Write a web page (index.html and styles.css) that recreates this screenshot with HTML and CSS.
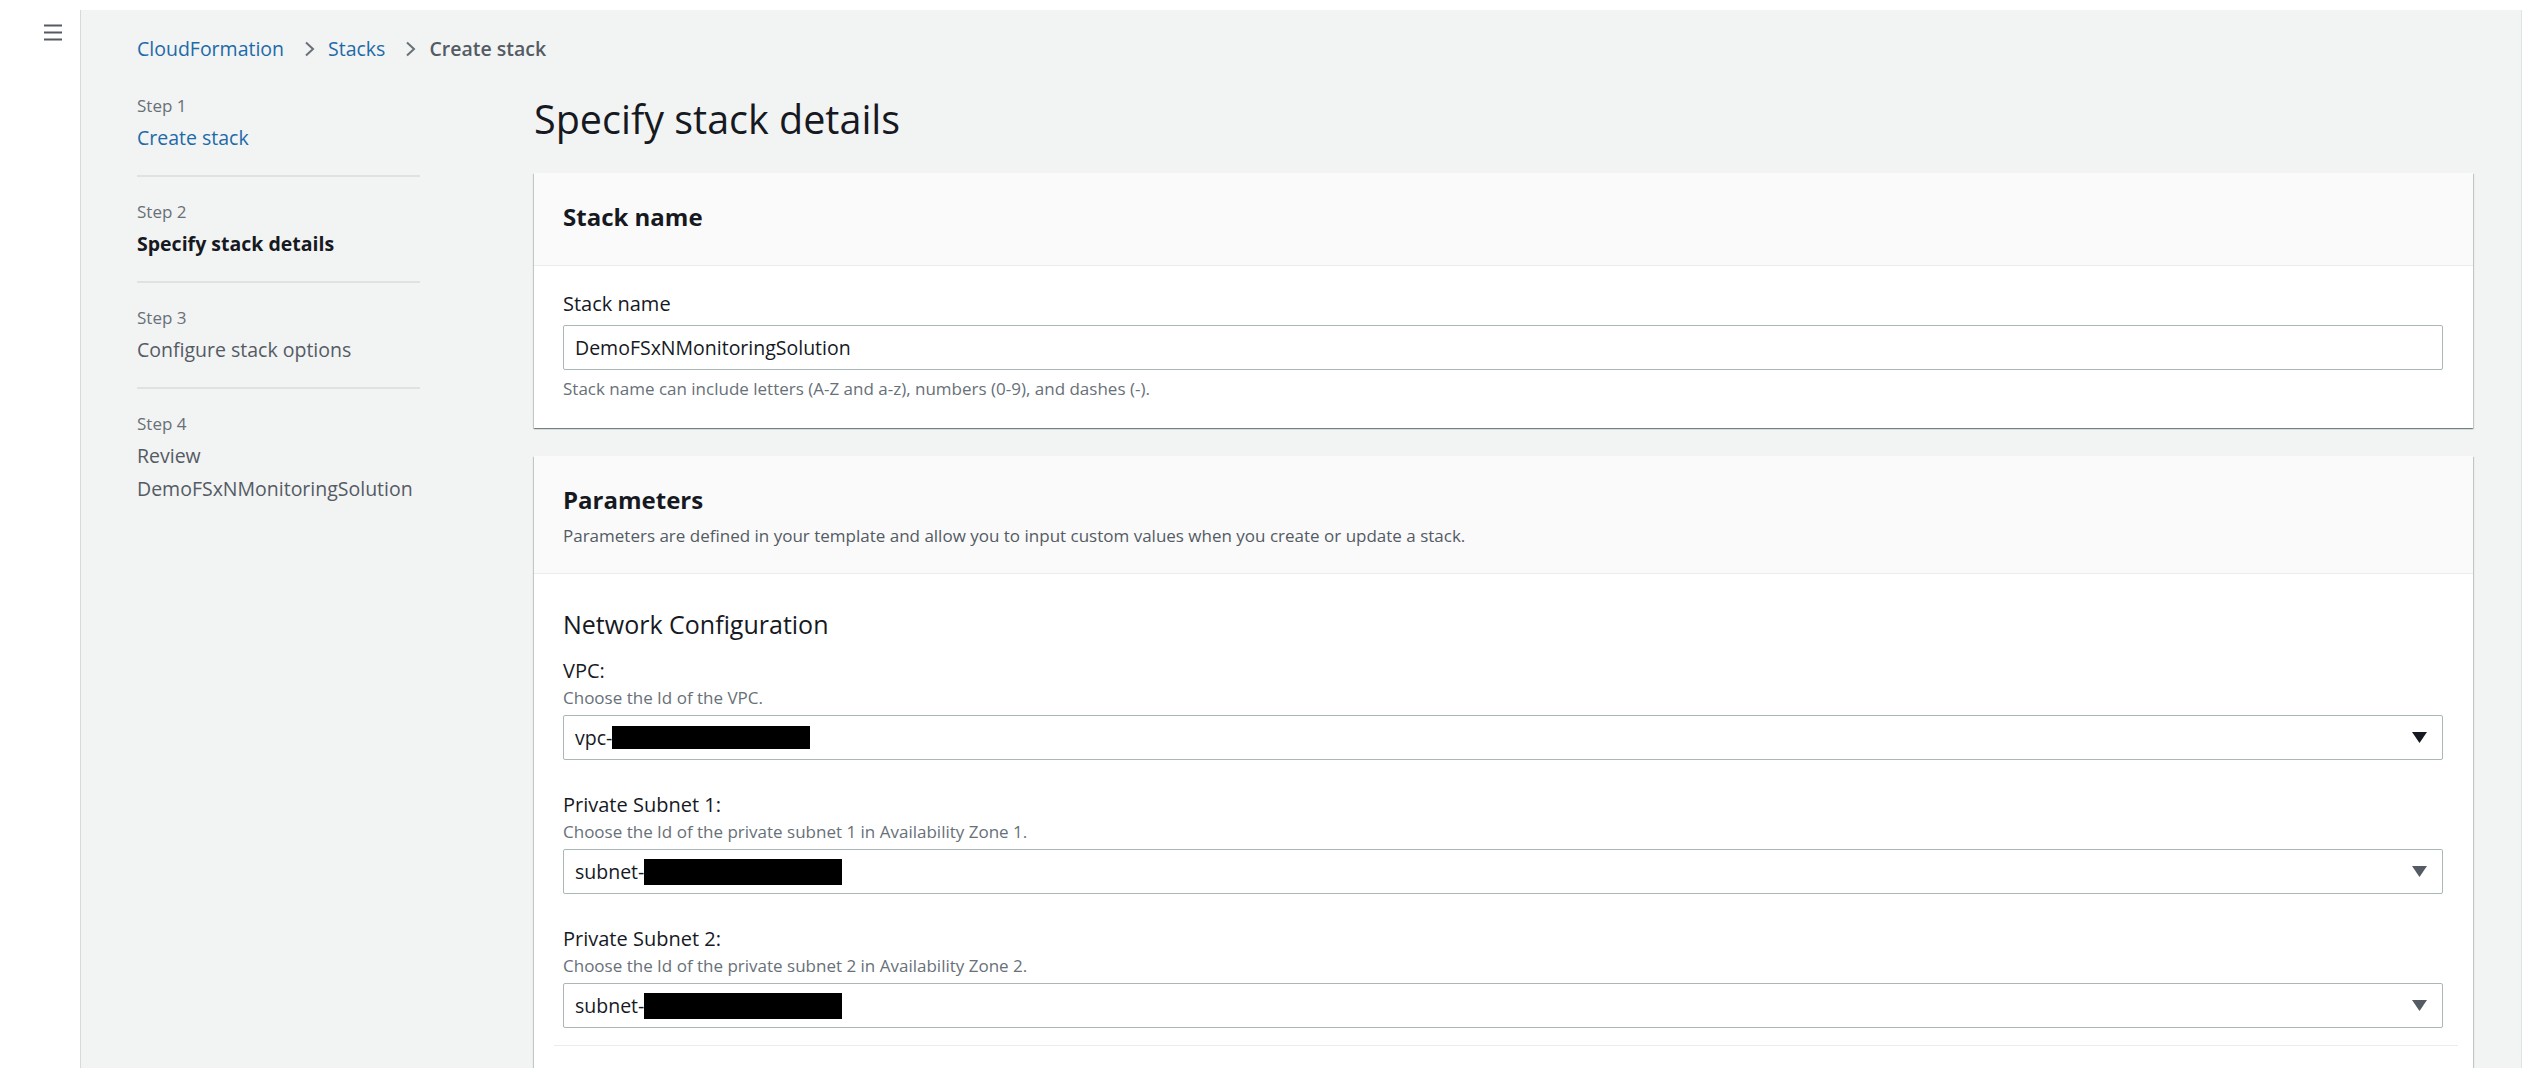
FILE: index.html
```html
<!DOCTYPE html>
<html lang="en">
<head>
<meta charset="utf-8">
<title>Create stack - CloudFormation</title>
<link rel="stylesheet" href="styles.css">
</head>
<body>
<div class="app">
  <aside class="rail">
    <button class="menu" aria-label="Open navigation">
      <svg width="18" height="18" viewBox="0 0 18 18"><path d="M0 2.5h18M0 9.5h18M0 16.5h18" stroke="#545b64" stroke-width="2" fill="none"/></svg>
    </button>
  </aside>
  <div class="content">
    <nav class="crumbs">
      <a class="crumb-link" href="#">CloudFormation</a>
      <svg class="chev" width="11" height="16" viewBox="0 0 11 16"><path d="M2 1.5l7 6.5-7 6.5" stroke="#687078" stroke-width="2" fill="none"/></svg>
      <a class="crumb-link" href="#">Stacks</a>
      <svg class="chev" width="11" height="16" viewBox="0 0 11 16"><path d="M2 1.5l7 6.5-7 6.5" stroke="#687078" stroke-width="2" fill="none"/></svg>
      <span class="crumb-current">Create stack</span>
    </nav>
    <div class="layout">
      <ol class="steps">
        <li class="step">
          <div class="step-num">Step 1</div>
          <a class="step-name step-link" href="#">Create stack</a>
        </li>
        <li class="step">
          <div class="step-num">Step 2</div>
          <div class="step-name step-active">Specify stack details</div>
        </li>
        <li class="step">
          <div class="step-num">Step 3</div>
          <div class="step-name">Configure stack options</div>
        </li>
        <li class="step step-last">
          <div class="step-num">Step 4</div>
          <div class="step-name">Review</div>
          <div class="step-name">DemoFSxNMonitoringSolution</div>
        </li>
      </ol>
      <main class="main">
        <h1 class="title">Specify stack details</h1>
        <section class="card">
          <header class="card-head">
            <h2 class="card-title">Stack name</h2>
          </header>
          <div class="card-body card-body-name">
            <label class="field-label">Stack name</label>
            <div class="input">DemoFSxNMonitoringSolution</div>
            <div class="hint hint-after">Stack name can include letters (A-Z and a-z), numbers (0-9), and dashes (-).</div>
          </div>
        </section>
        <section class="card card-params">
          <header class="card-head card-head-params">
            <h2 class="card-title">Parameters</h2>
            <p class="card-desc">Parameters are defined in your template and allow you to input custom values when you create or update a stack.</p>
          </header>
          <div class="card-body card-body-params">
            <h3 class="group-title">Network Configuration</h3>
            <div class="field field-first">
              <div class="field-label">VPC:</div>
              <div class="hint">Choose the Id of the VPC.</div>
              <div class="input select">
                <span class="value">vpc-<span class="redact redact-vpc"></span></span>
                <svg class="caret" width="15" height="11" viewBox="0 0 15 11"><path d="M0 0h15L7.5 11z" fill="#16191f"/></svg>
              </div>
            </div>
            <div class="field">
              <div class="field-label">Private Subnet 1:</div>
              <div class="hint">Choose the Id of the private subnet 1 in Availability Zone 1.</div>
              <div class="input select">
                <span class="value">subnet-<span class="redact"></span></span>
                <svg class="caret" width="15" height="11" viewBox="0 0 15 11"><path d="M0 0h15L7.5 11z" fill="#545b64"/></svg>
              </div>
            </div>
            <div class="field">
              <div class="field-label">Private Subnet 2:</div>
              <div class="hint">Choose the Id of the private subnet 2 in Availability Zone 2.</div>
              <div class="input select">
                <span class="value">subnet-<span class="redact"></span></span>
                <svg class="caret" width="15" height="11" viewBox="0 0 15 11"><path d="M0 0h15L7.5 11z" fill="#545b64"/></svg>
              </div>
            </div>
            <div class="group-end"></div>
          </div>
        </section>
      </main>
    </div>
  </div>
</div>
</body>
</html>
```

FILE: styles.css
```css
* { box-sizing: border-box; }

html, body {
  margin: 0;
  padding: 0;
  background: #ffffff;
}

body {
  font-family: "Open Sans", "Liberation Sans", sans-serif;
  color: #16191f;
}

.app {
  display: flex;
  height: 1078px;
  padding: 10px 14px 10px 0;
}

.rail {
  width: 81px;
  flex: none;
  border-right: 1px solid #d5dbdb;
  background: #ffffff;
  padding: 13px 0 0 44px;
}

.menu {
  display: block;
  border: 0;
  padding: 0;
  background: none;
  line-height: 0;
}

.content {
  flex: 1;
  min-width: 0;
  background: #f2f3f3;
  border-right: 1px solid #e1e4e4;
  overflow: hidden;
  padding: 25px 48px 0 56px;
}

.crumbs {
  display: flex;
  align-items: center;
  height: 28px;
  font-size: 19.5px;
  line-height: 28px;
}

.crumb-link {
  color: #1d6aa8;
  text-decoration: none;
}

.crumb-current {
  color: #545b64;
  font-weight: 600;
}

.chev {
  margin: 0 13px 0 20px;
}

.layout {
  display: grid;
  grid-template-columns: 283px 1fr;
  column-gap: 114px;
  margin-top: 28px;
}

.steps {
  list-style: none;
  margin: 0;
  padding: 0;
}

.step {
  padding: 20px 0 21px;
  border-bottom: 2px solid #dfe2e2;
}

.step:first-child {
  padding-top: 0;
}

.step-last {
  border-bottom: 0;
}

.step-num {
  font-size: 17px;
  line-height: 30px;
  color: #687078;
}

.step-name {
  display: block;
  font-size: 19.5px;
  line-height: 33px;
  color: #545b64;
}

.step-link {
  color: #1d6aa8;
  text-decoration: none;
}

.step-active {
  color: #16191f;
  font-weight: 700;
}

.main {
  padding-top: 4px;
}

.title {
  margin: 0 0 30px;
  font-size: 39.5px;
  line-height: 48px;
  font-weight: 400;
  color: #16191f;
}

.card {
  background: #ffffff;
  box-shadow: 0 1px 1px 0 rgba(0, 28, 36, 0.35), 1px 1px 1px 0 rgba(0, 28, 36, 0.15), -1px 1px 1px 0 rgba(0, 28, 36, 0.15);
}

.card-params {
  margin-top: 28px;
}

.card-head {
  background: #fafafa;
  border-bottom: 1px solid #eaeded;
  padding: 28px 30px 32px 29px;
}

.card-head-params {
  padding-bottom: 26px;
}

.card-title {
  margin: 0;
  font-size: 24px;
  line-height: 32px;
  font-weight: 700;
}

.card-desc {
  margin: 9px 0 0;
  font-size: 17px;
  line-height: 22px;
  color: #545b64;
}

.card-body {
  padding: 0 30px 0 29px;
}

.card-body-name {
  padding-top: 26px;
  padding-bottom: 29px;
}

.card-body-name .field-label {
  line-height: 24px;
}

.card-body-params {
  padding-top: 34px;
  min-height: 520px;
}

.group-title {
  margin: 0;
  font-size: 25px;
  line-height: 32px;
  font-weight: 400;
}

.field {
  margin-top: 32px;
}

.field-first {
  margin-top: 18px;
}

.field-label {
  display: block;
  font-size: 20px;
  line-height: 26px;
  color: #16191f;
}

.hint {
  margin-top: 4px;
  font-size: 17px;
  line-height: 20px;
  color: #687078;
}

.hint-after {
  margin-top: 9px;
}

.input {
  margin-top: 7px;
  height: 45px;
  border: 1px solid #aab7b8;
  border-radius: 2px;
  background: #ffffff;
  padding: 0 15px 0 11px;
  font-size: 19.5px;
  line-height: 43px;
  color: #16191f;
}

.card-body-name .input {
  margin-top: 9px;
}

.select {
  display: flex;
  align-items: center;
  justify-content: space-between;
}

.value {
  display: flex;
  align-items: center;
}

.redact {
  display: inline-block;
  width: 198px;
  height: 26px;
  background: #000000;
}

.redact-vpc {
  height: 23px;
}

.caret {
  flex: none;
}

.group-end {
  margin: 17px -15px 0 -9px;
  border-top: 1px solid #eaeded;
}
```
